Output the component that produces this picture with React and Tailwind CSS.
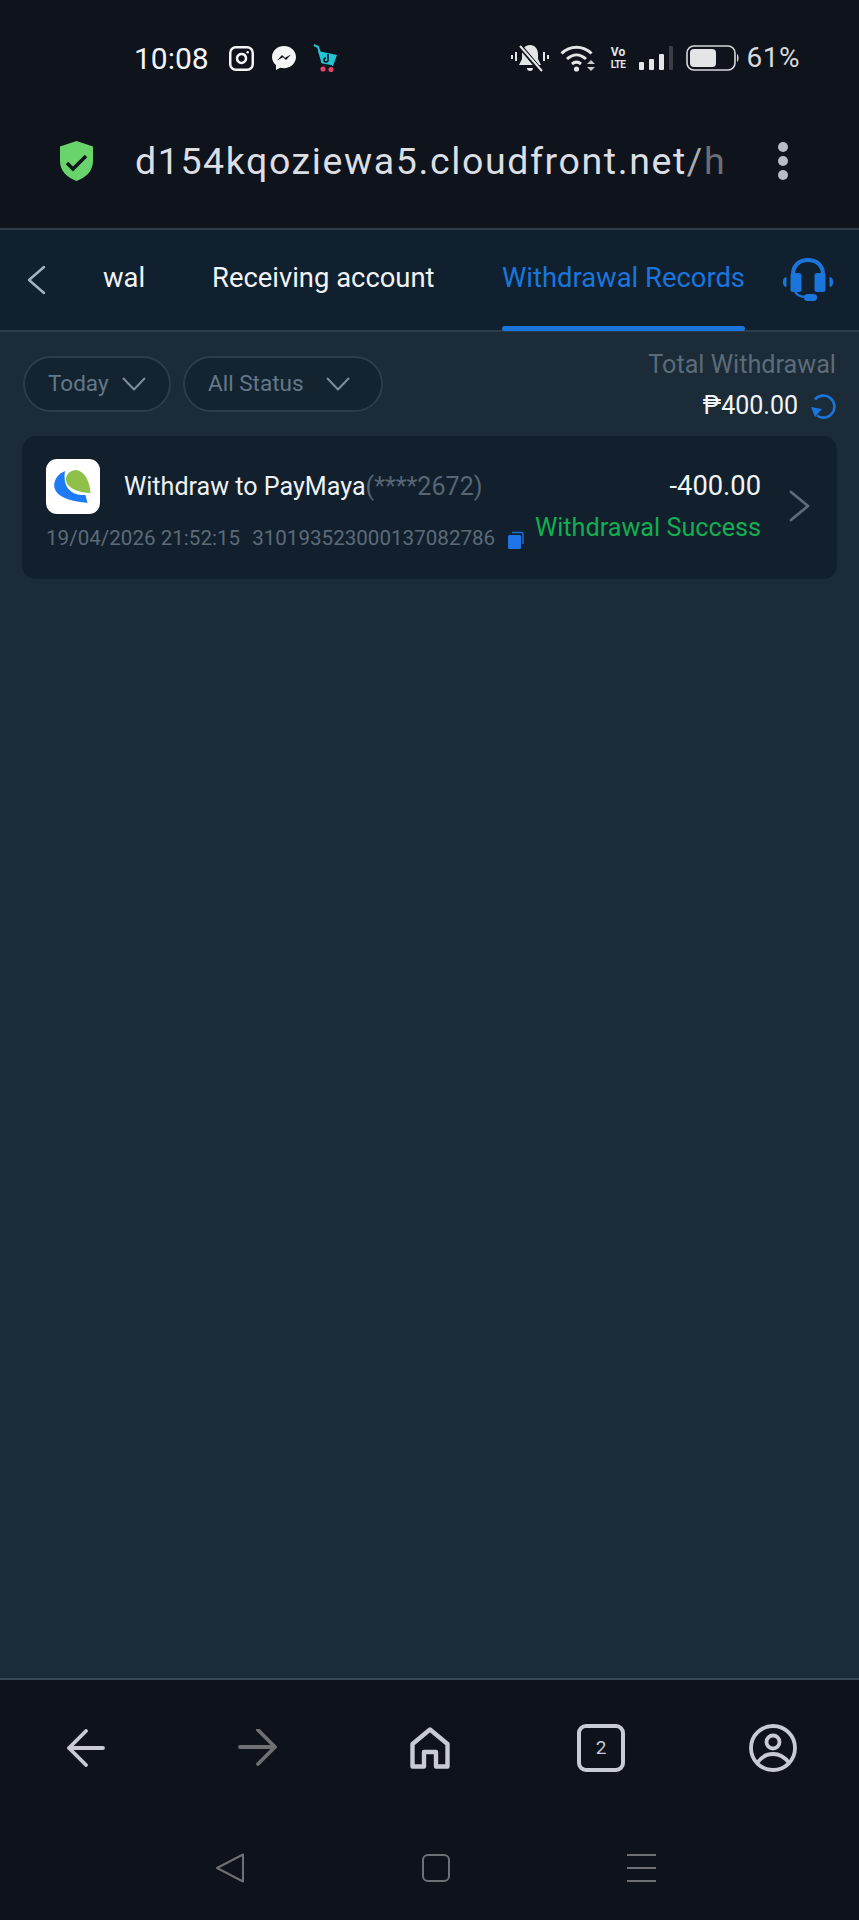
import React from "react";
import { Instagram } from "lucide-react";

const font = { fontFamily: "Roboto, sans-serif" };

function Messenger() {
  return (
    <svg width="26" height="26" viewBox="0 0 26 26" className="ml-[16px]">
      <path d="M13 1C6.400 1 1 5.900 1 12c0 3.300 1.500 6.100 4 8.100V25l4.300-2.300c1.200.3 2.400.5 3.700.5 6.600 0 12-5 12-11.200S19.600 1 13 1z" fill="#f4f5f6" />
      <path d="M6 15.500l5-5.400 3 2.600 6-3.200-5 5.500-3-2.700z" fill="#0e131c" />
    </svg>
  );
}

function Cart() {
  return (
    <svg width="24" height="28" viewBox="0 0 24 28" className="ml-[16px]">
      <path d="M1 1l4 2 2 6" stroke="#25c4d4" strokeWidth="2" fill="none" />
      <path d="M5 7l19 4-4 11-11-1z" fill="#25c4d4" />
      <path d="M8 20l11 2" stroke="#0e131c" strokeWidth="1.600" />
      <path d="M15 10v6a2 2 0 1 1-2-2" stroke="#0e131c" strokeWidth="1.600" fill="none" />
      <circle cx="10" cy="25" r="2.600" fill="#e8436a" />
      <circle cx="18" cy="25.500" r="2.600" fill="#e8436a" />
    </svg>
  );
}

function Bell() {
  return (
    <svg width="38" height="30" viewBox="0 0 38 30">
      <path d="M19 2c-5 0-8 4-8 9v5l-3 6h22l-3-6v-5c0-5-3-9-8-9z" fill="#e4e5e6" />
      <path d="M16 25h6a3 3 0 0 1-6 0z" fill="#e4e5e6" />
      <path d="M8 2l22 26" stroke="#0e131c" strokeWidth="5" />
      <path d="M9 3l22 25" stroke="#e4e5e6" strokeWidth="2" />
      <path d="M1 12v4M5 9v9M33 9v9M37 12v4" stroke="#e4e5e6" strokeWidth="2" />
    </svg>
  );
}

function Wifi() {
  return (
    <svg width="36" height="28" viewBox="0 0 36 28" fill="none" className="ml-[11px]">
      <path d="M1.500 9.500C10 1 23 1 31.500 9.500" stroke="#e4e5e6" strokeWidth="3" />
      <path d="M7 15c6-5.500 13-5.500 19 0" stroke="#e4e5e6" strokeWidth="3" />
      <path d="M12 20c3-2.500 6-2.500 9 0" stroke="#e4e5e6" strokeWidth="3" />
      <circle cx="16.500" cy="25" r="2.600" fill="#e4e5e6" />
      <path d="M27 20l4-4 4 4zM27 23h8l-4 4z" fill="#c8c9cb" />
    </svg>
  );
}

function Signal() {
  return (
    <svg width="35" height="25" viewBox="0 0 35 25" className="ml-[12px]">
      <rect x="0" y="16" width="5" height="8" rx="1" fill="#e4e5e6" />
      <rect x="10" y="13" width="5" height="11" rx="1" fill="#e4e5e6" />
      <rect x="20" y="8" width="5" height="16" rx="1" fill="#e4e5e6" />
      <rect x="30" y="0" width="4" height="24" rx="1" fill="#3a3d44" />
    </svg>
  );
}

function Battery() {
  return (
    <svg width="54" height="26" viewBox="0 0 54 26" className="ml-[12px]">
      <rect x="1" y="1" width="48" height="24" rx="7" fill="none" stroke="#d8d9db" strokeWidth="1.600" />
      <rect x="4" y="4" width="26" height="18" rx="4" fill="#e4e5e6" />
      <path d="M51 9c2 1 2 7 0 8z" fill="#d8d9db" />
    </svg>
  );
}

function Shield() {
  return (
    <svg width="33" height="40" viewBox="0 0 33 40">
      <path d="M16.500 0L33 5.500V20c0 10-7 16.500-16.500 20C7 36.500 0 30 0 20V5.500z" fill="#69d46b" />
      <path d="M7 22l6 6L26 15" stroke="#10161c" strokeWidth="3.400" fill="none" />
    </svg>
  );
}

function Headset() {
  return (
    <svg width="50" height="44" viewBox="0 0 50 44" fill="none">
      <path d="M10 22V16C10 7 17 2 25 2s15 5 15 14v6" stroke="#1a76dc" strokeWidth="4" />
      <rect x="7.500" y="15" width="11" height="19" rx="2.500" fill="#1a76dc" />
      <rect x="31.500" y="15" width="11" height="19" rx="2.500" fill="#1a76dc" />
      <path d="M3 19.500v9a3 3 0 0 1 -2.500-3v-3a3 3 0 0 1 2.500-3zM47 19.500a3 3 0 0 1 2.500 3v3a3 3 0 0 1-2.500 3z" fill="#1a76dc" stroke="#1a76dc" />
      <path d="M12 33c1 4 5 6 12 6" stroke="#1a76dc" strokeWidth="2.400" />
      <rect x="21" y="36" width="13" height="7" rx="3.500" fill="#1a76dc" />
    </svg>
  );
}

function Refresh() {
  return (
    <svg width="26" height="26" viewBox="0 0 26 26" fill="none">
      <path d="M5 6.500A11 11 0 1 1 7 22.500" stroke="#1a76dc" strokeWidth="2.600" />
      <path d="M1 14l11 2-7 8z" fill="#1a76dc" />
    </svg>
  );
}

function MayaLogo() {
  return (
    <div className="w-[54px] h-[55px] rounded-[11px] bg-white flex items-center justify-center shrink-0">
      <svg width="38" height="34" viewBox="0 0 38 34">
        <path d="M11 1C3 4-1 12 .5 18c2 8 13 13 33 15l-2-8C20 26 8 20 11 1z" fill="#1e7bf6" />
        <path d="M22 0c9 1 14 12 14.500 23C26 23 14 19 12 11 11 5 16 0 22 0z" fill="#8fc04a" />
      </svg>
    </div>
  );
}

function Copy() {
  return (
    <svg width="16" height="18" viewBox="0 0 16 18" className="ml-[13px] shrink-0 mt-[4px]">
      <path d="M4 1.500h10a1 1 0 0 1 1 1V13" stroke="#1a6fd8" strokeWidth="1.400" fill="none" />
      <rect x="0" y="4" width="13" height="14" rx="1.500" fill="#1f74e6" />
    </svg>
  );
}

function Chevron({ width, height, d, color, stroke }) {
  return (
    <svg width={width} height={height} viewBox={`0 0 ${width} ${height}`} fill="none" stroke={color} strokeWidth={stroke} strokeLinecap="round" strokeLinejoin="round">
      <path d={d} />
    </svg>
  );
}

function Pill({ label, w, gap }) {
  return (
    <div className={`h-[56px] ${w} rounded-full border-2 border-[#2b3d4b] bg-[#13232f] flex items-center pl-[23px] text-[22.500px] text-[#63788a]`}>
      <span>{label}</span>
      <div className={gap}>
        <Chevron width={24} height={14} d="M1.500 1.500L12 12.500 22.500 1.500" color="#7e8d9a" stroke={2} />
      </div>
    </div>
  );
}

export default function App() {
  return (
    <div style={font} className="w-[859px] h-[1920px] flex flex-col bg-[#1b2b38] overflow-hidden">
      <div className="h-[228px] bg-[#0e131c] shrink-0">
        <div className="h-[116px] flex items-center pl-[134px] pr-[59px]">
          <span className="text-[30px] text-[#f4f5f6]">10:08</span>
          <Instagram size={27} strokeWidth={2.200} className="ml-[19px] text-[#f4f5f6]" />
          <Messenger />
          <Cart />
          <div className="ml-auto flex items-center">
            <Bell />
            <Wifi />
            <div className="ml-[14px] flex flex-col items-center text-[#e4e5e6] font-bold w-[17px]">
              <span className="text-[12px] leading-[14px]">Vo</span>
              <span className="text-[10px] leading-[12px] tracking-[-0.500px]">LTE</span>
            </div>
            <Signal />
            <Battery />
            <span className="ml-[7px] text-[28px] tracking-[0.500px] text-[#d8d9db]">61%</span>
          </div>
        </div>
        <div className="h-[90px] flex items-center pl-[60px]">
          <Shield />
          <span className="ml-[42px] text-[37.500px] tracking-[1.600px] text-[#dcdee3] w-[590px] overflow-hidden whitespace-nowrap">
            d154kqoziewa5.cloudfront.net<span className="text-[#a9abb1]">/</span><span className="text-[#6b6e74]">h</span>
          </span>
          <div className="ml-[53px] flex flex-col gap-[4px]">
            <div className="w-[10px] h-[10px] rounded-full bg-[#b8bcc6]" />
            <div className="w-[10px] h-[10px] rounded-full bg-[#b8bcc6]" />
            <div className="w-[10px] h-[10px] rounded-full bg-[#b8bcc6]" />
          </div>
        </div>
      </div>

      <div className="h-[104px] shrink-0 bg-[#11202e] border-t-2 border-b-2 border-[#2c3c4a] flex items-stretch text-[27.400px] relative">
        <div className="flex items-center w-[103px] pl-[26px]">
          <Chevron width={20} height={30} d="M18 2L3 15l15 13" color="#a7b4bf" stroke={2.400} />
        </div>
        <div className="flex items-center text-[#f1f4f6] w-[109px] pb-[3px]">wal</div>
        <div className="flex items-center text-[#f1f4f6] w-[290px] pb-[3px]">Receiving account</div>
        <div className="relative flex items-center text-[#1a76dc] w-[243px] pb-[3px] whitespace-nowrap">
          Withdrawal Records
          <div className="absolute left-0 right-0 bottom-[-1px] h-[5px] rounded-full bg-[#1a76dc]" />
        </div>
        <div className="flex items-center ml-[38px]">
          <Headset />
        </div>
      </div>

      <div className="h-[104px] shrink-0 flex items-start pl-[23px] pr-[23px] pt-[23px]">
        <div className="flex gap-[12px] pt-[1px]">
          <Pill label="Today" w="w-[148px]" gap="ml-[13px]" />
          <Pill label="All Status" w="w-[200px]" gap="ml-[22px]" />
        </div>
        <div className="ml-auto flex flex-col items-end -mt-[6px]">
          <span className="text-[25.200px] leading-[32px] text-[#5c6b78]">Total Withdrawal</span>
          <div className="flex items-center mt-[9px]">
            <span className="text-[25px] leading-[32px] text-[#f1f4f6]">₱400.00</span>
            <div className="ml-[12px]"><Refresh /></div>
          </div>
        </div>
      </div>

      <div className="mx-[22px] h-[143px] rounded-[14px] bg-[#11202c] flex items-start pt-[23px] relative">
        <div className="flex-1 pl-[24px] min-w-0">
          <div className="flex items-center">
            <MayaLogo />
            <span className="ml-[24px] text-[25.100px] text-[#eef1f3]">Withdraw to PayMaya</span>
            <span className="text-[25.100px] text-[#566674]">(****2672)</span>
          </div>
          <div className="flex items-center mt-[10px] text-[20.600px] leading-[28px] text-[#5c6b78] whitespace-nowrap">
            <span>19/04/2026 21:52:15</span>
            <span className="ml-[12px]">310193523000137082786</span>
            <Copy />
          </div>
        </div>
        <div className="absolute right-[76px] top-[30px] flex flex-col items-end">
          <span className="text-[27.300px] leading-[40px] text-[#f1f4f6]">-400.00</span>
          <span className="mt-[2px] text-[25.200px] leading-[40px] text-[#13ae51]">Withdrawal Success</span>
        </div>
        <div className="absolute right-[27px] top-[54px]">
          <Chevron width={21} height={32} d="M2 2l17 14L2 30" color="#5e6b78" stroke={2.800} />
        </div>
      </div>

      <div className="mt-auto h-[242px] shrink-0 bg-[#0e131b] border-t-2 border-[#3a4855] flex flex-col">
        <div className="h-[136px] flex items-center pl-[66px]">
          <svg width="40" height="38" viewBox="0 0 40 38" fill="none" stroke="#c8cbd4" strokeWidth="3.800" strokeLinecap="round" strokeLinejoin="round">
            <path d="M3 19h34M20 2L3 19l17 17" />
          </svg>
          <svg width="40" height="38" viewBox="0 0 40 38" fill="none" stroke="#6e7074" strokeWidth="3.800" strokeLinecap="round" strokeLinejoin="round" className="ml-[132px]">
            <path d="M2 18h35M20 1l17 17-17 17" />
          </svg>
          <svg width="40" height="42" viewBox="0 0 40 42" fill="none" stroke="#c8cbd4" strokeWidth="4.400" strokeLinejoin="round" className="ml-[132px]">
            <path d="M2.500 17L20 2.500 37.500 17v22.500H26V25H14v14.500H2.500z" />
          </svg>
          <div className="ml-[127px] w-[48px] h-[48px] rounded-[9px] border-[4px] border-[#c8cbd4] flex items-center justify-center text-[19px] text-[#c8cbd4]">2</div>
          <svg width="48" height="48" viewBox="0 0 48 48" fill="none" stroke="#c8cbd4" strokeWidth="3.800" className="ml-[124px]">
            <circle cx="24" cy="24" r="22" />
            <circle cx="24" cy="18" r="6.500" />
            <path d="M8 39c5-7 10-9 16-9s11 2 16 9" />
          </svg>
        </div>
        <div className="flex items-center justify-between pl-[215px] pr-[203px] mt-[37px]">
          <svg width="30" height="30" viewBox="0 0 30 30" fill="none" stroke="#6e7075" strokeWidth="2" strokeLinejoin="round">
            <path d="M2 15L28 1.500v27z" />
          </svg>
          <div className="w-[28px] h-[28px] rounded-[6px] border-2 border-[#6e7075]" />
          <div className="w-[29px] h-[28px] flex flex-col justify-between">
            <div className="h-[2px] bg-[#6e7075]" />
            <div className="h-[2px] bg-[#6e7075]" />
            <div className="h-[2px] bg-[#6e7075]" />
          </div>
        </div>
      </div>
    </div>
  );
}
